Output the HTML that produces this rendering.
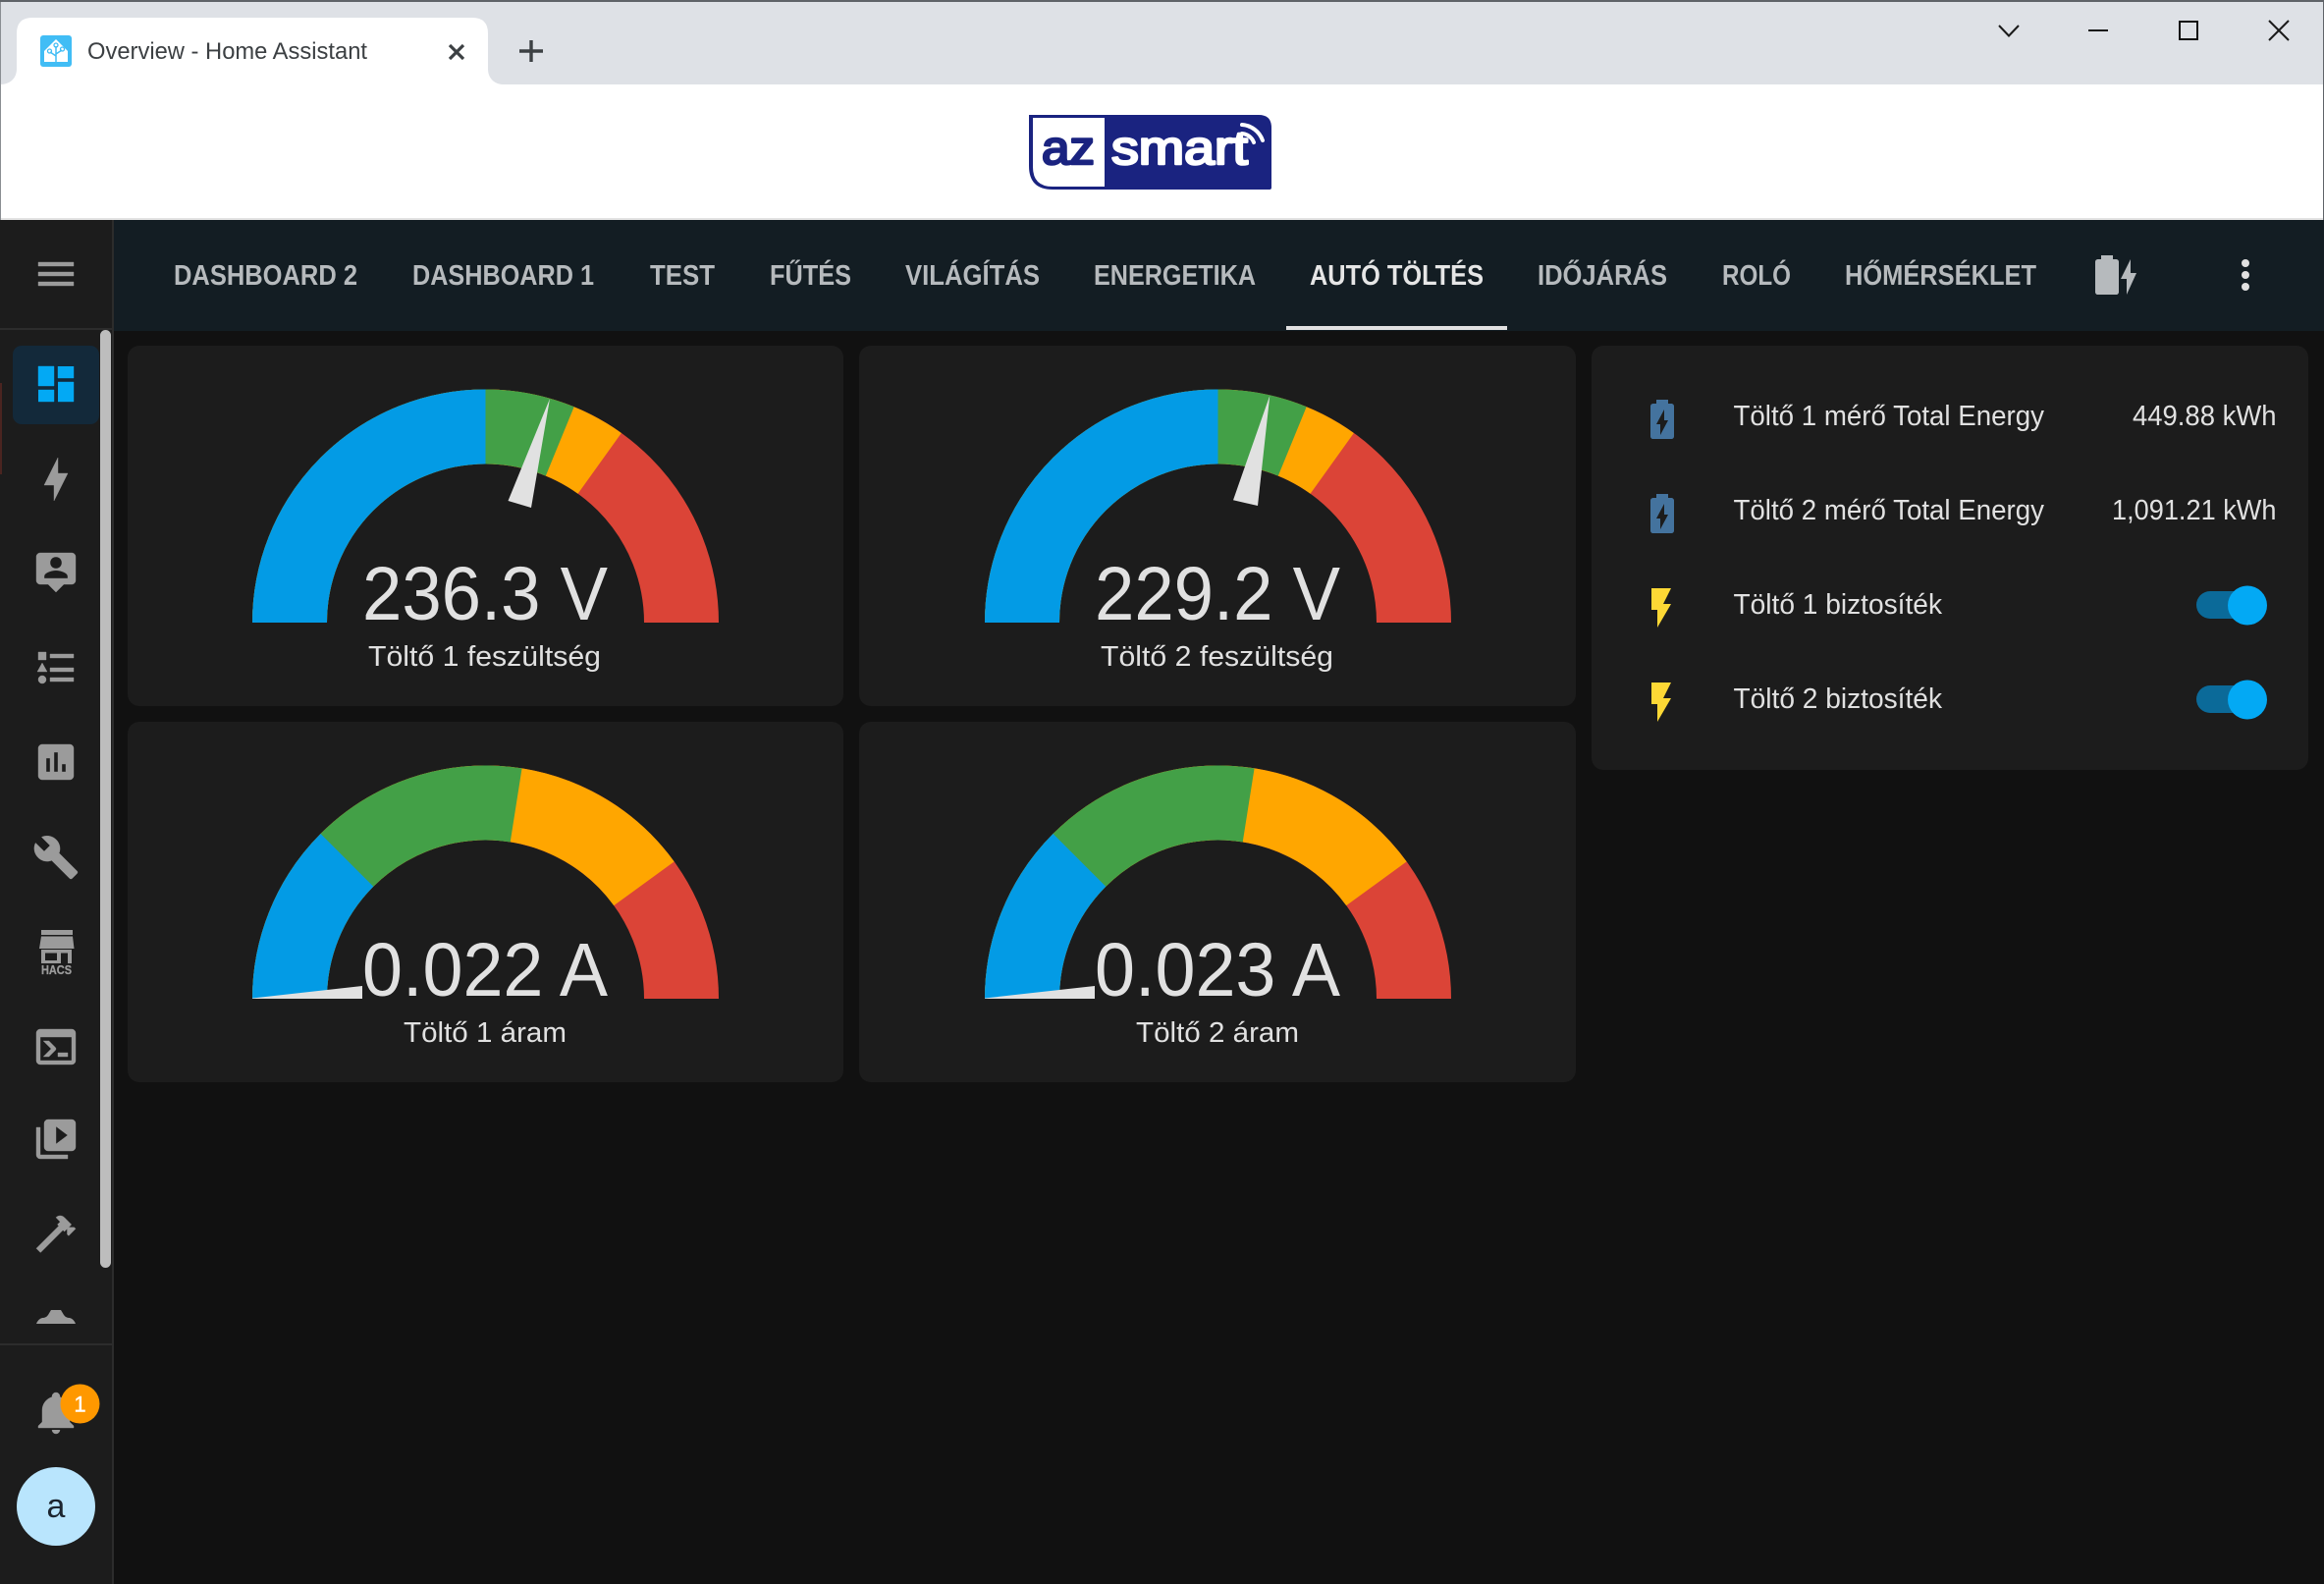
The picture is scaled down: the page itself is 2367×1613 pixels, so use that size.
<!DOCTYPE html>
<html lang="hu">
<head>
<meta charset="utf-8">
<title>Overview - Home Assistant</title>
<style>
html,body{margin:0;padding:0;background:#111;width:2367px;height:1613px;overflow:hidden}
svg{display:block}
text{font-family:"Liberation Sans",sans-serif}
.tab{font-size:29px;font-weight:700;fill:#b6babd}
.tab.on{fill:#e6e6e6}
.val{font-size:77px;fill:#e1e1e1}
.lbl{font-size:29px;fill:#e1e1e1}
.ic{fill:#9b9b9b;stroke:#9b9b9b;stroke-width:.2}
</style>
</head>
<body>
<svg xmlns="http://www.w3.org/2000/svg" width="2367" height="1613" viewBox="0 0 2367 1613">
<defs>
  <path id="arc" d="M-199.500,0A199.500,199.500 0 0 1 199.500,0" fill="none" stroke-width="76" pathLength="100"/>
  <g id="gaugeV">
    <use href="#arc" stroke="#db4437"/>
    <use href="#arc" stroke="#ffa600" stroke-dasharray="69.8 1000"/>
    <use href="#arc" stroke="#43a047" stroke-dasharray="62.4 1000"/>
    <use href="#arc" stroke="#039be5" stroke-dasharray="50 1000"/>
  </g>
  <g id="gaugeA">
    <use href="#arc" stroke="#db4437"/>
    <use href="#arc" stroke="#ffa600" stroke-dasharray="80 1000"/>
    <use href="#arc" stroke="#43a047" stroke-dasharray="55 1000"/>
    <use href="#arc" stroke="#039be5" stroke-dasharray="25 1000"/>
  </g>
  <path id="batt" fill-rule="evenodd" d="M16.67,4H15V2H9V4H7.33A1.33,1.33 0 0,0 6,5.33V20.67C6,21.4 6.6,22 7.33,22H16.67A1.33,1.33 0 0,0 18,20.67V5.33C18,4.6 17.4,4 16.67,4ZM11,20V14.5H9L13,7V12.5H15L11,20Z"/>
  <path id="flash" d="M7,2V13H10V22L17,10H13L17,2H7Z"/>
</defs>

<!-- page -->
<rect width="2367" height="1613" fill="#111"/>

<!-- browser tab strip -->
<rect width="2367" height="86" fill="#dee1e6"/>
<rect width="2367" height="2" fill="#5f6368"/>
<rect y="86" width="2367" height="136" fill="#fff"/>
<rect y="222" width="2367" height="2" fill="#e3e3e3"/>
<rect x="0" y="2" width="1" height="222" fill="#8a8e93"/>
<rect x="2366" y="2" width="1" height="222" fill="#5f6368"/>
<path d="M0,86C10,86 17,80 17,70V34Q17,18 33,18H481Q497,18 497,34V70C497,80 504,86 513,86Z" fill="#fff"/>
<!-- favicon -->
<rect x="41" y="36" width="32" height="32" rx="3" fill="#41bdf5"/>
<path d="M57,40L69,52V63H45V52Z" fill="#fff"/>
<path d="M57,63V47M57,57L51,53M57,55L63,51" stroke="#41bdf5" stroke-width="1.5" fill="none"/>
<circle cx="57" cy="46" r="2" fill="none" stroke="#41bdf5" stroke-width="1.3"/>
<circle cx="50.5" cy="52" r="2" fill="none" stroke="#41bdf5" stroke-width="1.3"/>
<circle cx="63.5" cy="50" r="2" fill="none" stroke="#41bdf5" stroke-width="1.3"/>
<text x="89" y="60" font-size="24" fill="#3c4043" textLength="285" lengthAdjust="spacingAndGlyphs">Overview - Home Assistant</text>
<path d="M458,46L472,60M472,46L458,60" stroke="#3c4043" stroke-width="3.2" fill="none"/>
<path d="M541,41V63M529,52H553" stroke="#3c4043" stroke-width="3.4" fill="none"/>
<!-- window controls -->
<path d="M2036,26L2046,36.500L2056,26" stroke="#1a1a1a" stroke-width="2" fill="none"/>
<rect x="2127" y="30" width="20" height="2" fill="#1a1a1a"/>
<rect x="2220" y="22" width="18" height="18" fill="none" stroke="#111" stroke-width="2"/>
<path d="M2311,21L2331,41M2331,21L2311,41" stroke="#1a1a1a" stroke-width="2" fill="none"/>

<!-- az smart logo -->
<path d="M1048,117H1282Q1295,117 1295,130V191Q1295,193 1293,193H1072Q1048,193 1048,169Z" fill="#1a2380"/>
<path d="M1052,120H1125V190H1072Q1052,190 1052,170Z" fill="#fff"/>
<text x="1061" y="167" font-size="48" fill="#1a2380" stroke="#1a2380" stroke-width="2.500" stroke-linejoin="round" textLength="54" lengthAdjust="spacingAndGlyphs">az</text>
<text x="1132" y="167" font-size="48" fill="#fff" stroke="#fff" stroke-width="2.500" stroke-linejoin="round" textLength="139" lengthAdjust="spacingAndGlyphs">smart</text>
<path d="M1265,127A24,24 0 0 1 1286,143M1265,136A14,14 0 0 1 1277,145" stroke="#fff" stroke-width="4" stroke-linecap="round" fill="none"/>

<!-- toolbar -->
<rect x="116" y="224" width="2251" height="113" fill="#131d23"/>
<g class="tabs">
<text class="tab" x="177" y="290" textLength="187" lengthAdjust="spacingAndGlyphs">DASHBOARD 2</text>
<text class="tab" x="420" y="290" textLength="185" lengthAdjust="spacingAndGlyphs">DASHBOARD 1</text>
<text class="tab" x="662" y="290" textLength="66" lengthAdjust="spacingAndGlyphs">TEST</text>
<text class="tab" x="784" y="290" textLength="83" lengthAdjust="spacingAndGlyphs">FŰTÉS</text>
<text class="tab" x="922" y="290" textLength="137" lengthAdjust="spacingAndGlyphs">VILÁGÍTÁS</text>
<text class="tab" x="1114" y="290" textLength="165" lengthAdjust="spacingAndGlyphs">ENERGETIKA</text>
<text class="tab on" x="1334" y="290" textLength="177" lengthAdjust="spacingAndGlyphs">AUTÓ TÖLTÉS</text>
<text class="tab" x="1566" y="290" textLength="132" lengthAdjust="spacingAndGlyphs">IDŐJÁRÁS</text>
<text class="tab" x="1754" y="290" textLength="70" lengthAdjust="spacingAndGlyphs">ROLÓ</text>
<text class="tab" x="1879" y="290" textLength="195" lengthAdjust="spacingAndGlyphs">HŐMÉRSÉKLET</text>
</g>
<rect x="1310" y="332" width="225" height="4" fill="#e1e1e1"/>
<path transform="translate(2130,256) scale(2)" fill="#b6babd" d="M23,11H20V4L15,14H18V22L23,11M12.67,4H11V2H5V4H3.33A1.33,1.33 0 0,0 2,5.33V20.67C2,21.4 2.6,22 3.33,22H12.67C13.4,22 14,21.4 14,20.67V5.33A1.33,1.33 0 0,0 12.67,4Z"/>
<circle cx="2287" cy="268" r="4" fill="#e1e1e1"/>
<circle cx="2287" cy="280" r="4" fill="#e1e1e1"/>
<circle cx="2287" cy="292" r="4" fill="#e1e1e1"/>

<!-- sidebar -->
<rect x="0" y="224" width="114" height="1389" fill="#1c1c1c"/>
<rect x="114" y="224" width="2" height="1389" fill="#2c2c2c"/>
<rect x="0" y="334" width="114" height="2" fill="#2c2c2c"/>
<rect x="0" y="1368" width="114" height="2" fill="#2c2c2c"/>
<rect x="0" y="390" width="2" height="93" fill="#4a2420"/>
<path transform="translate(33,255) scale(2)" class="ic" d="M3,6H21V8H3V6M3,11H21V13H3V11M3,16H21V18H3V16Z"/>
<rect x="13" y="352" width="88" height="80" rx="9" fill="#13293a"/>
<path transform="translate(33,367) scale(2)" fill="#03a9f4" stroke="#03a9f4" stroke-width=".2" d="M13,3V9H21V3M13,21H21V11H13M3,21H11V15H3M3,13H11V3H3V13Z"/>
<path transform="translate(33,464) scale(2)" class="ic" d="M11 15H6L13 1V9H18L11 23V15Z"/>
<path transform="translate(33,559) scale(2)" class="ic" d="M20 2H4C2.89 2 2 2.89 2 4V16C2 17.11 2.9 18 4 18H8L12 22L16 18H20C21.11 18 22 17.11 22 16V4C22 2.89 21.11 2 20 2M12 4C13.66 4 15 5.34 15 7C15 8.66 13.66 10 12 10C10.34 10 9 8.66 9 7C9 5.34 10.34 4 12 4M18 15H6V14C6 12 10 10.9 12 10.9C14 10.9 18 12 18 14V15Z"/>
<path transform="translate(33,656) scale(2)" class="ic" d="M5,9.5L7.5,14H2.5L5,9.5M3,4H7V8H3V4M5,20A2,2 0 0,0 7,18A2,2 0 0,0 5,16A2,2 0 0,0 3,18A2,2 0 0,0 5,20M9,5V7H21V5H9M9,19H21V17H9V19M9,14H21V12H9V14Z"/>
<path transform="translate(33,752) scale(2)" class="ic" d="M19 3H5C3.9 3 3 3.9 3 5V19C3 20.1 3.9 21 5 21H19C20.1 21 21 20.1 21 19V5C21 3.9 20.1 3 19 3M9 17H7V10H9V17M13 17H11V7H13V17M17 17H15V13H17V17Z"/>
<path transform="translate(33,849) scale(2)" class="ic" d="M22.7,19L13.6,9.9C14.5,7.6 14,4.9 12.1,3C10.1,1 7.1,0.6 4.7,1.7L9,6L6,9L1.6,4.7C0.4,7.1 0.9,10.1 2.9,12.1C4.8,14 7.5,14.5 9.8,13.6L18.9,22.7C19.3,23.1 19.9,23.1 20.3,22.7L22.6,20.4C23.1,20 23.1,19.3 22.7,19Z"/>
<!-- HACS -->
<path fill="#9b9b9b" fill-rule="evenodd" d="M42,947H74V952H42ZM42,953.500H74L75.500,966H40ZM42,967H73V981H42ZM46,970.500V978H58V970.500ZM62,970.500V981H69V970.500Z"/>
<text x="42" y="992" font-size="13" font-weight="700" fill="#9b9b9b" stroke="#9b9b9b" stroke-width=".3" textLength="31" lengthAdjust="spacingAndGlyphs">HACS</text>
<path transform="translate(33,1042) scale(2)" class="ic" d="M20,19V7H4V19H20M20,3A2,2 0 0,1 22,5V19A2,2 0 0,1 20,21H4A2,2 0 0,1 2,19V5C2,3.89 2.9,3 4,3H20M13,17V15H18V17H13M9.58,13L5.57,9H8.4L11.7,12.3C12.09,12.69 12.09,13.33 11.7,13.72L8.42,17H5.59L9.58,13Z"/>
<path transform="translate(33,1136) scale(2)" class="ic" d="M4,6H2V20A2,2 0 0,0 4,22H18V20H4V6M20,2H8A2,2 0 0,0 6,4V16A2,2 0 0,0 8,18H20A2,2 0 0,0 22,16V4A2,2 0 0,0 20,2M12,14.5V5.5L18,10L12,14.5Z"/>
<path transform="translate(33,1232) scale(2)" class="ic" d="M2 19.63L13.43 8.2L12.72 7.5L14.14 6.07L12 3.89C13.2 2.7 15.09 2.7 16.27 3.89L19.87 7.5L18.45 8.91H21.29L22 9.62L18.45 13.21L17.74 12.5V9.62L16.27 11.04L15.56 10.33L4.13 21.76L2 19.63Z"/>
<path fill="#9b9b9b" d="M37,1348Q39,1343 43,1342Q47,1342 49,1339L52,1334H62L65,1339Q67,1342 71,1342Q75,1343 77,1348Z"/>
<path transform="translate(33,1414) scale(2)" class="ic" d="M21,19V20H3V19L5,17V11C5,7.9 7.03,5.17 10,4.29C10,4.19 10,4.1 10,4A2,2 0 0,1 12,2A2,2 0 0,1 14,4C14,4.1 14,4.19 14,4.29C16.97,5.17 19,7.9 19,11V17L21,19M14,21A2,2 0 0,1 12,23A2,2 0 0,1 10,21"/>
<circle cx="81.500" cy="1429.500" r="20" fill="#ff9800"/>
<text x="81.500" y="1437.500" font-size="22" fill="#fff" stroke="#fff" stroke-width=".4" text-anchor="middle">1</text>
<circle cx="57" cy="1534" r="40" fill="#b9e5fd"/>
<text x="57" y="1545" font-size="34" fill="#1c2530" text-anchor="middle">a</text>
<rect x="102" y="336" width="11" height="955" rx="5.500" fill="#bdbdbd"/>

<!-- cards -->
<rect x="130" y="352" width="729" height="367" rx="12" fill="#1c1c1c"/>
<rect x="875" y="352" width="730" height="367" rx="12" fill="#1c1c1c"/>
<rect x="130" y="735" width="729" height="367" rx="12" fill="#1c1c1c"/>
<rect x="875" y="735" width="730" height="367" rx="12" fill="#1c1c1c"/>
<rect x="1621" y="352" width="730" height="432" rx="12" fill="#1c1c1c"/>

<!-- gauge 1 -->
<use href="#gaugeV" x="494.500" y="634"/>
<polygon points="560,406 517.500,510 541,517" fill="#e1e1e1"/>
<text class="val" x="369" y="631" textLength="250" lengthAdjust="spacingAndGlyphs">236.3 V</text>
<text class="lbl" x="375" y="678" textLength="237" lengthAdjust="spacingAndGlyphs">Töltő 1 feszültség</text>
<!-- gauge 2 -->
<use href="#gaugeV" x="1240.500" y="634"/>
<polygon points="1293.300,402.700 1256,509.300 1281,515" fill="#e1e1e1"/>
<text class="val" x="1115" y="631" textLength="250" lengthAdjust="spacingAndGlyphs">229.2 V</text>
<text class="lbl" x="1121" y="678" textLength="237" lengthAdjust="spacingAndGlyphs">Töltő 2 feszültség</text>
<!-- gauge 3 -->
<use href="#gaugeA" x="494.500" y="1017"/>
<polygon points="257,1016.500 369,1004 369,1017 257,1017" fill="#e1e1e1"/>
<text class="val" x="369" y="1014" textLength="250" lengthAdjust="spacingAndGlyphs">0.022 A</text>
<text class="lbl" x="411" y="1061" textLength="166" lengthAdjust="spacingAndGlyphs">Töltő 1 áram</text>
<!-- gauge 4 -->
<use href="#gaugeA" x="1240.500" y="1017"/>
<polygon points="1003,1016.500 1115,1004 1115,1017 1003,1017" fill="#e1e1e1"/>
<text class="val" x="1115" y="1014" textLength="250" lengthAdjust="spacingAndGlyphs">0.023 A</text>
<text class="lbl" x="1157" y="1061" textLength="166" lengthAdjust="spacingAndGlyphs">Töltő 2 áram</text>

<!-- entities -->
<use href="#batt" transform="translate(1669,403) scale(2)" fill="#44739e"/>
<use href="#batt" transform="translate(1669,499) scale(2)" fill="#44739e"/>
<use href="#flash" transform="translate(1668,595) scale(2)" fill="#fdd835"/>
<use href="#flash" transform="translate(1668,691) scale(2)" fill="#fdd835"/>
<text class="lbl" x="1765.500" y="433" textLength="316.500" lengthAdjust="spacingAndGlyphs">Töltő 1 mérő Total Energy</text>
<text class="lbl" x="2172" y="433" textLength="146.500" lengthAdjust="spacingAndGlyphs">449.88 kWh</text>
<text class="lbl" x="1765.500" y="529" textLength="316.500" lengthAdjust="spacingAndGlyphs">Töltő 2 mérő Total Energy</text>
<text class="lbl" x="2151" y="529" textLength="167.500" lengthAdjust="spacingAndGlyphs">1,091.21 kWh</text>
<text class="lbl" x="1765.500" y="625" textLength="212.500" lengthAdjust="spacingAndGlyphs">Töltő 1 biztosíték</text>
<text class="lbl" x="1765.500" y="721" textLength="212.500" lengthAdjust="spacingAndGlyphs">Töltő 2 biztosíték</text>
<rect x="2237" y="602" width="64" height="28" rx="14" fill="#0b6a99"/>
<circle cx="2289" cy="616.500" r="20" fill="#03a9f4"/>
<rect x="2237" y="698" width="64" height="28" rx="14" fill="#0b6a99"/>
<circle cx="2289" cy="712.500" r="20" fill="#03a9f4"/>
</svg>
</body>
</html>
